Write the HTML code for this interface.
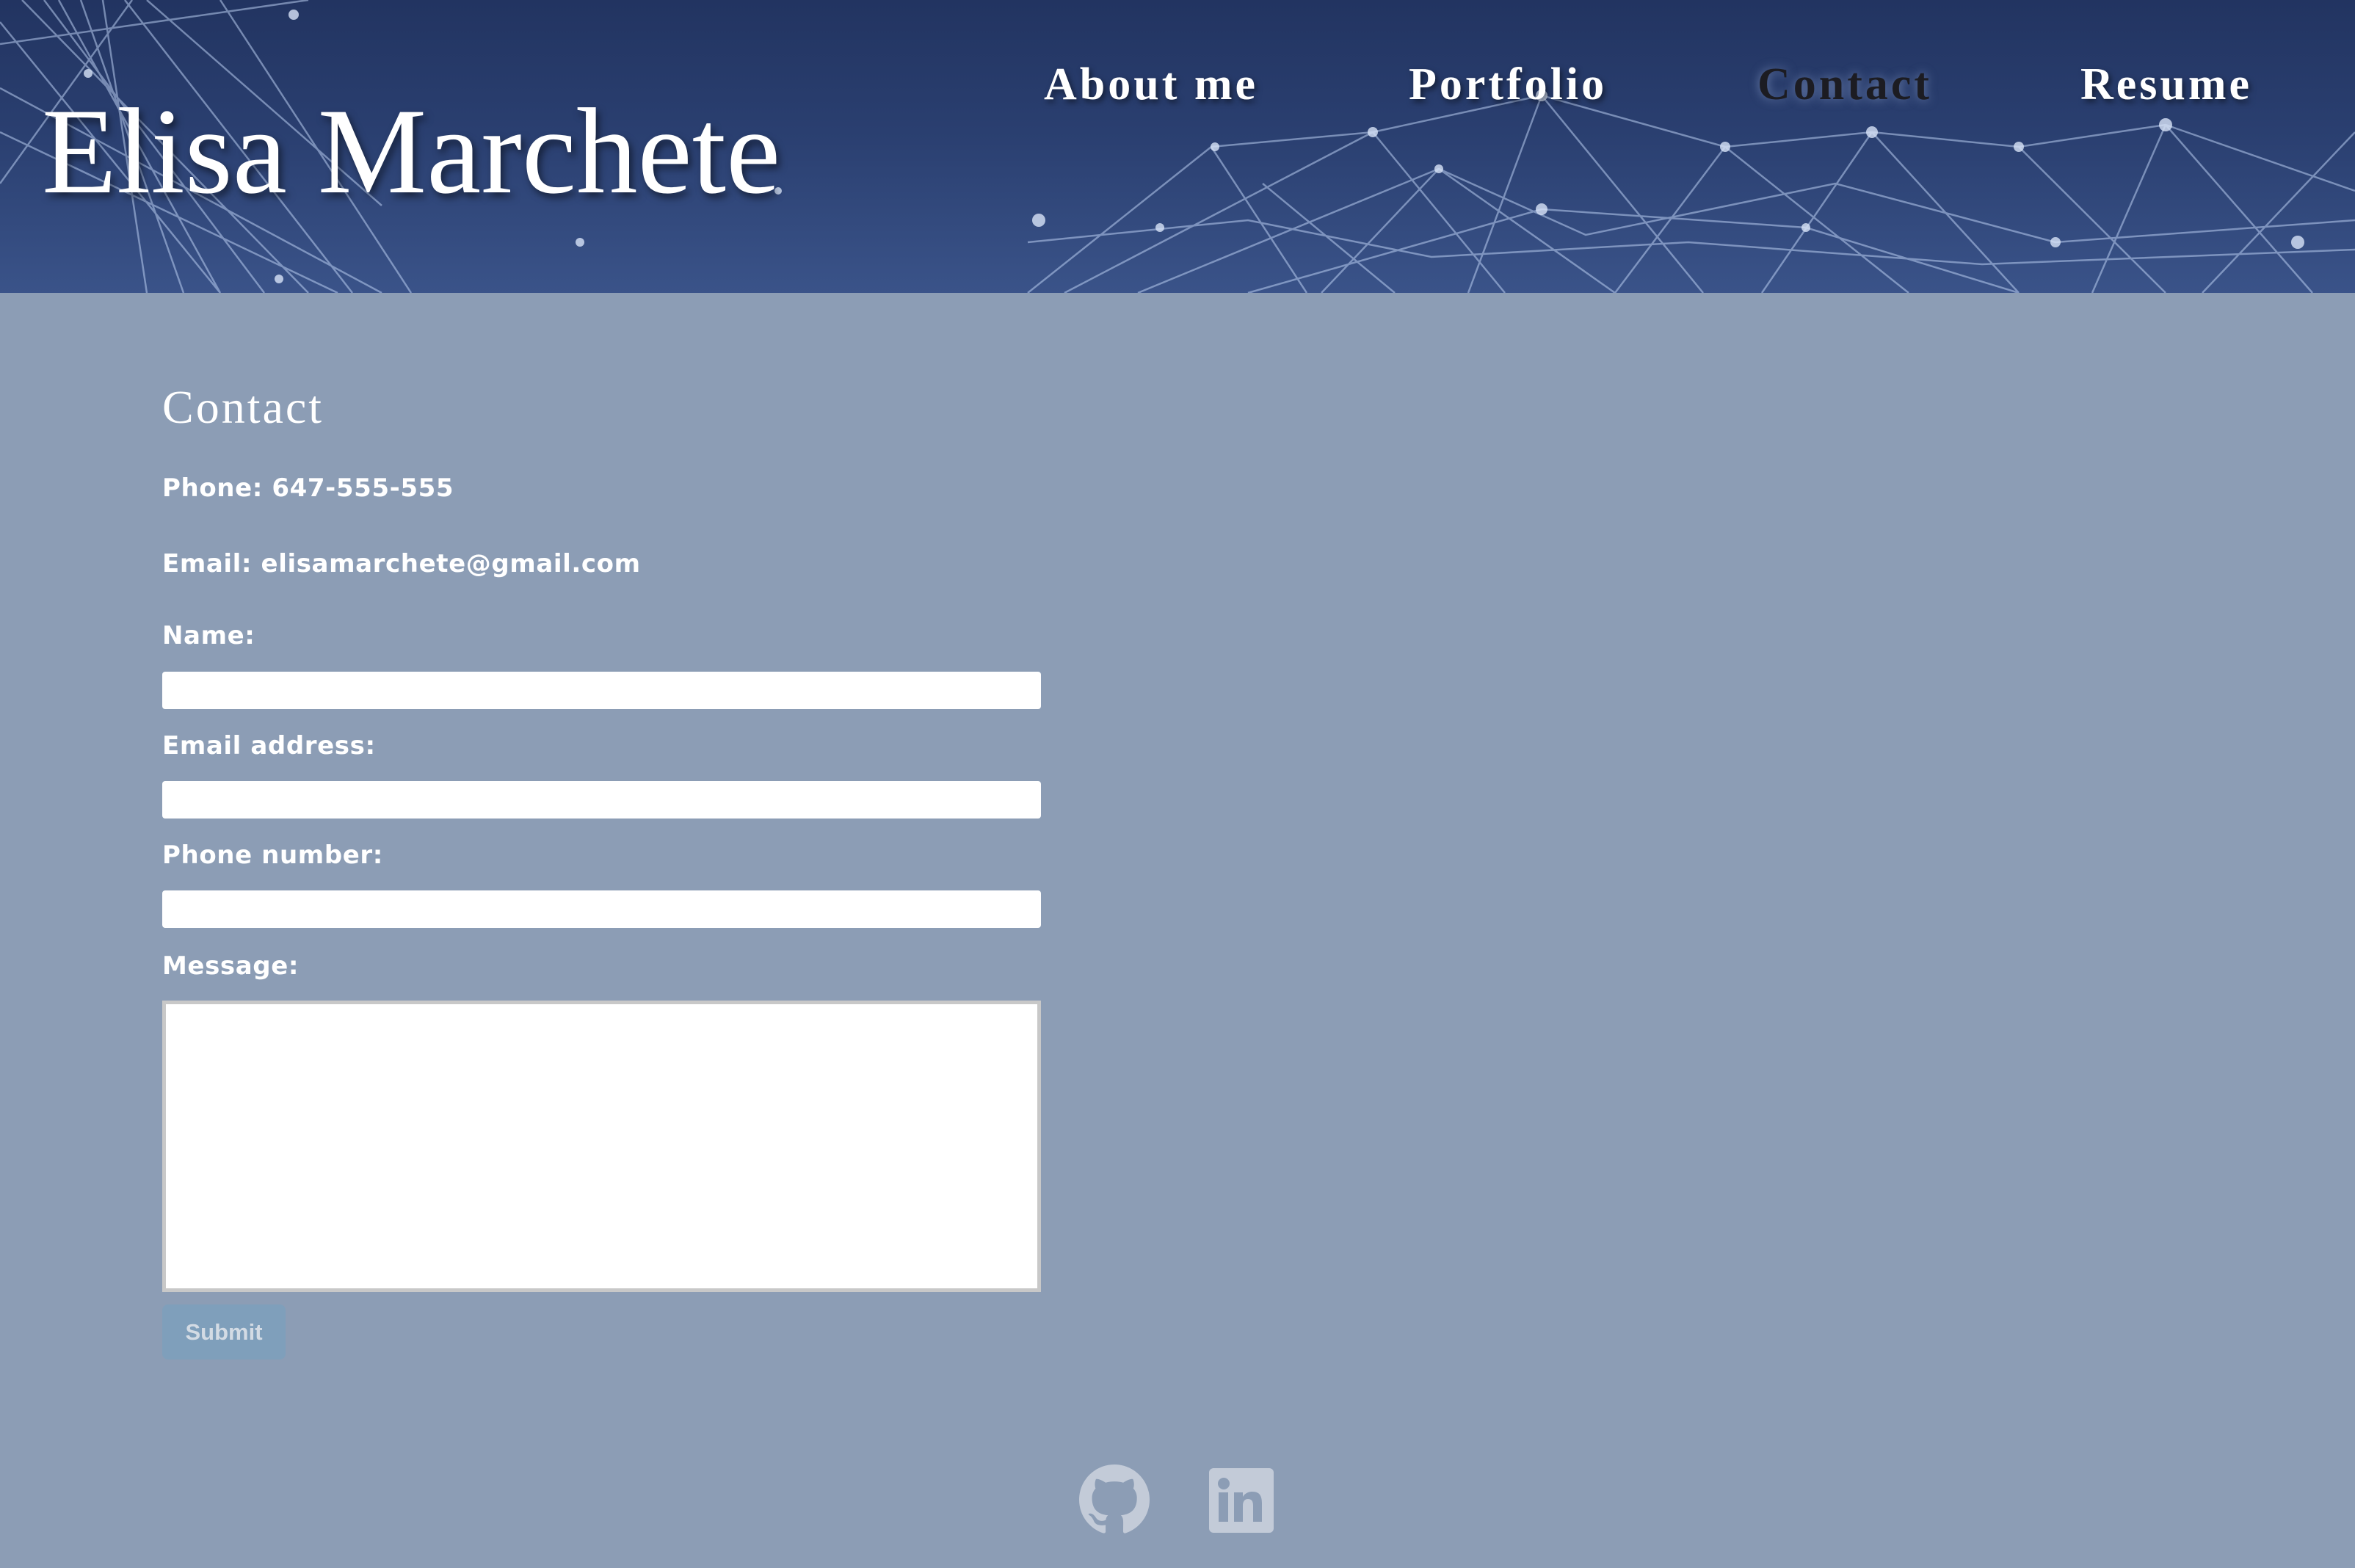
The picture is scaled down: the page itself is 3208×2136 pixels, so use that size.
<!DOCTYPE html>
<html><head><meta charset="utf-8"><style>
body{margin:0;width:3208px;height:2136px;background:#8c9db5;overflow:hidden;position:relative;font-family:"Liberation Sans",sans-serif}
#hdr{position:absolute;left:0;top:0;width:3208px;height:399px;background:linear-gradient(180deg,#223461 0%,#2a3f70 45%,#3a5389 100%);overflow:hidden}
.abs{position:absolute;white-space:nowrap}
.t{font-family:"Liberation Serif",serif;color:#fff}
.nav{font-family:"Liberation Serif",serif;font-weight:bold;font-size:62px;letter-spacing:4px;color:#fff;top:80px;text-shadow:3px 4px 8px rgba(0,0,0,.5)}
.lab{font-family:"DejaVu Sans","Liberation Sans",sans-serif;font-weight:bold;color:#fff;font-size:34px;letter-spacing:0.6px}
.inp{position:absolute;left:221px;width:1197px;height:51px;background:#fff;border-radius:4px}
</style></head><body>
<div id="hdr">
<svg width="3208" height="399" style="position:absolute;left:0;top:0">
<g stroke="#b9cdf0" stroke-opacity=".55" stroke-width="2.5" fill="none">
<path d="M0 60L420 0M30 0L420 399M80 0L300 399M140 0L200 399M0 120L520 399M0 250L180 0M300 0L560 399M200 0L520 280M60 0L360 399M110 0L250 399M0 180L460 399M170 0L480 399M0 30L300 399"/>
<path d="M1400 399L1650 200L1780 399M1650 200L1870 180L2050 399M1870 180L2100 130L2350 200L2550 180L2750 200L2950 170L3208 260M1960 230L2200 399M2100 130L2320 399M2350 200L2200 399M2550 180L2400 399M2550 180L2750 399M2750 200L2950 399M2950 170L2850 399M2950 170L3150 399M1550 399L1960 230L2160 320L2500 250L2800 330L3208 300M1400 330L1700 300L1950 350L2300 330L2700 360L3208 340M1720 250L1900 399M2350 200L2600 399M2100 130L2000 399M3208 180L3000 399M1450 399L1870 180M1700 399L2100 285L2460 310L2750 399M1800 399L1960 230"/>
</g>
<g fill="#d8e4f8" fill-opacity=".8">
<circle cx="400" cy="20" r="7"/><circle cx="1655" cy="200" r="6"/><circle cx="1870" cy="180" r="7"/><circle cx="2100" cy="130" r="8"/><circle cx="2350" cy="200" r="7"/><circle cx="2550" cy="180" r="8"/><circle cx="2750" cy="200" r="7"/><circle cx="2950" cy="170" r="9"/><circle cx="2100" cy="285" r="8"/><circle cx="1960" cy="230" r="6"/><circle cx="1415" cy="300" r="9"/><circle cx="2800" cy="330" r="7"/><circle cx="3130" cy="330" r="9"/><circle cx="1060" cy="260" r="5"/><circle cx="1580" cy="310" r="6"/><circle cx="2460" cy="310" r="6"/><circle cx="790" cy="330" r="6"/><circle cx="120" cy="100" r="6"/><circle cx="380" cy="380" r="6"/>
</g></svg>
<div class="abs t" style="left:57px;top:122px;font-size:167px;line-height:170px;text-shadow:4px 6px 10px rgba(0,0,0,.5)">Elisa Marchete</div>
<div class="abs nav" style="left:1422px">About me</div>
<div class="abs nav" style="left:1919px">Portfolio</div>
<div class="abs nav" style="left:2394px;color:#1c1c22;text-shadow:0 0 14px rgba(180,200,240,.5)">Contact</div>
<div class="abs nav" style="left:2834px">Resume</div>
</div>
<div class="abs t" style="left:221px;top:518px;font-size:64px;letter-spacing:3px">Contact</div>
<div class="abs lab" style="left:221px;top:645px">Phone: 647-555-555</div>
<div class="abs lab" style="left:221px;top:748px">Email: elisamarchete@gmail.com</div>
<div class="abs lab" style="left:221px;top:846px">Name:</div>
<div class="inp" style="top:915px"></div>
<div class="abs lab" style="left:221px;top:996px">Email address:</div>
<div class="inp" style="top:1064px"></div>
<div class="abs lab" style="left:221px;top:1145px">Phone number:</div>
<div class="inp" style="top:1213px"></div>
<div class="abs lab" style="left:221px;top:1296px">Message:</div>
<div style="position:absolute;left:221px;top:1363px;width:1187px;height:387px;background:#fff;border:5px solid #c8c8c8"></div>
<div style="position:absolute;left:221px;top:1777px;width:168px;height:75px;background:#7f9fbb;border-radius:8px;color:#d3dbe4;font-weight:bold;font-size:31px;text-align:center;line-height:75px">Submit</div>
<svg style="position:absolute;left:1470px;top:1995px" width="96" height="96" viewBox="0 0 16 16"><path fill="#c3cbd8" d="M8 0C3.580 0 0 3.580 0 8c0 3.540 2.290 6.530 5.470 7.590.4.07.55-.17.55-.38 0-.19-.01-.82-.01-1.490-2.010.37-2.530-.49-2.690-.94-.09-.23-.48-.94-.82-1.130-.28-.15-.68-.52-.01-.53.63-.01 1.080.58 1.230.82.72 1.210 1.870.87 2.330.66.07-.52.28-.87.51-1.070-1.780-.2-3.640-.89-3.640-3.950 0-.87.31-1.590.82-2.150-.08-.2-.36-1.020.08-2.120 0 0 .67-.21 2.200.82.64-.18 1.320-.27 2-.27.68 0 1.360.09 2 .27 1.530-1.040 2.200-.82 2.200-.82.44 1.100.16 1.920.08 2.120.51.56.82 1.270.82 2.150 0 3.070-1.870 3.750-3.650 3.950.29.25.54.73.54 1.480 0 1.070-.01 1.930-.01 2.200 0 .21.15.46.55.38A8.013 8.013 0 0016 8c0-4.420-3.580-8-8-8z"/></svg>
<svg style="position:absolute;left:1647px;top:2000px" width="88" height="88" viewBox="0 0 88 88"><rect width="88" height="88" rx="6" fill="#c3cbd8"/><circle cx="20" cy="21" r="8" fill="#8c9db5"/><rect x="13" y="33" width="13" height="40" fill="#8c9db5"/><path d="M34 33h12v6c3-5 8-7 13-7 10 0 13 6 13 16v25H60V51c0-6-2-9-7-9s-7 4-7 9v22H34z" fill="#8c9db5"/></svg>
</body></html>
